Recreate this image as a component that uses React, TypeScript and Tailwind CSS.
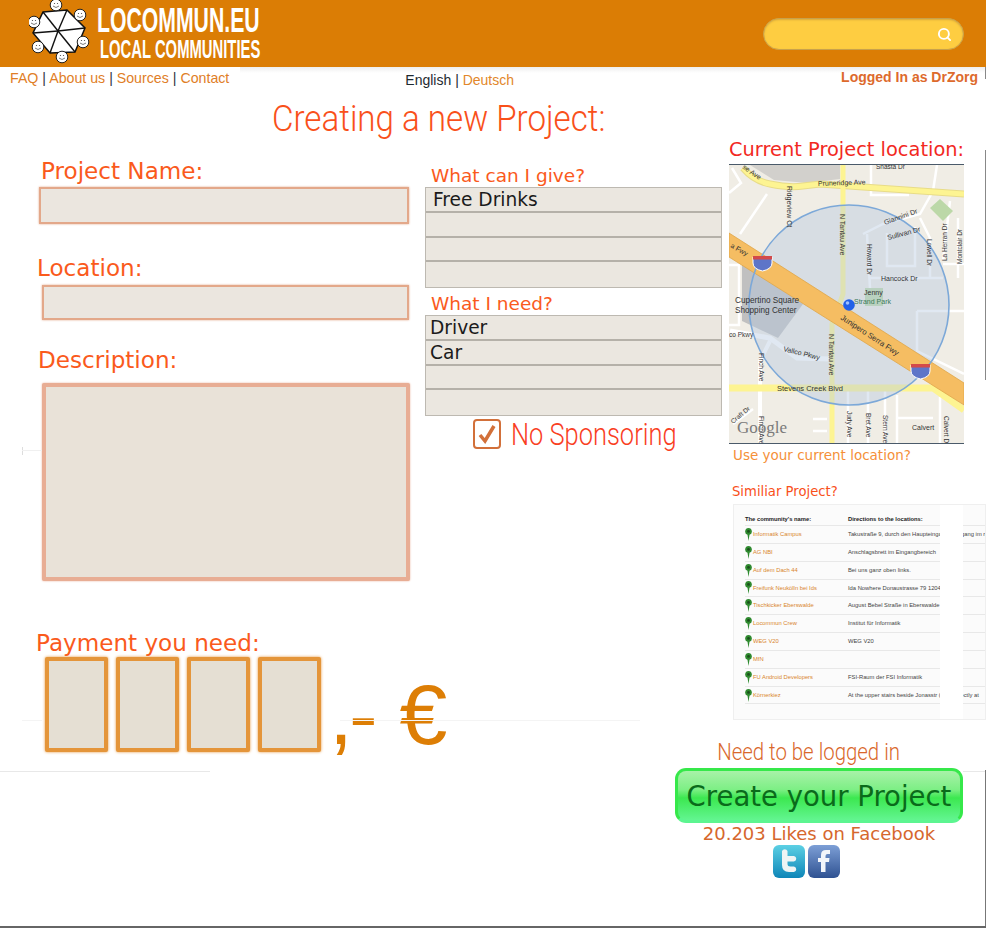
import { Search } from "lucide-react";

const labelClass =
  "block font-['DejaVu_Sans'] text-[23.100px] leading-[32px] text-[#fa5a1c]";
const inputClass =
  "bg-[#ebe6df] border-2 border-[#e3a88a] shadow-[0_0_2px_#e3a88a]";

const ListBox = ({ rows, indent }: { rows: string[]; indent: string }) => {
  return (
    <div className="flex flex-col w-[297px] border border-[#bdb9b1] ml-[1px]">
      {rows.map((row, i) => (
        <div
          key={i}
          className={`h-[24.75px] bg-[#ebe7e0] border-b-2 last:border-b-0 border-[#b5b1a9] font-['DejaVu_Sans'] text-[18.6px] leading-[23px] text-[#1b1b1b] ${indent}`}
        >
          {row}
        </div>
      ))}
    </div>
  );
};

const Logo = () => {
  const center = [29, 31];
  const corners = [
    [14, 12],
    [38, 10],
    [56, 28],
    [46, 52],
    [21, 53],
    [4, 33],
  ];
  const faces = [
    [27, 5],
    [51, 15],
    [54, 42],
    [33, 57],
    [9, 47],
    [5, 22],
  ];
  return (
    <svg width="62" height="65" viewBox="0 0 62 65" className="shrink-0">
      <polygon
        points={corners.map((c) => c.join(",")).join(" ")}
        fill="#fff"
        stroke="#111"
        strokeWidth="1.500"
      />
      {corners.map(([x, y], i) => (
        <path
          key={i}
          d={`M${center[0]} ${center[1]}L${x} ${y}`}
          stroke="#111"
          strokeWidth="1.400"
        />
      ))}
      {faces.map(([cx, cy], i) => (
        <g key={i}>
          <circle cx={cx} cy={cy} r="5.800" fill="#fff" stroke="#222" strokeWidth="1" />
          <path d={`M${cx - 3} ${cy + 1}q3 3 6 0`} fill="none" stroke="#444" strokeWidth="0.700" />
          <circle cx={cx - 1.5} cy={cy - 1.5} r="0.600" fill="#444" />
          <circle cx={cx + 1.5} cy={cy - 1.5} r="0.600" fill="#444" />
        </g>
      ))}
    </svg>
  );
};

const MapView = () => {
  return (
    <svg
      width="235"
      height="278"
      viewBox="0 0 235 278"
      className="block box-content border-y border-[#4a5a6a] font-['Liberation_Sans']"
    >
      <rect width="235" height="278" fill="#f0ede5" />
      <path d="M21 0H111V14L78 18L45 15Z" fill="#d2d0cc" />

      <g fill="none" stroke="#fff" strokeWidth="2.500">
        <path d="M38 29L11 69" />
        <path d="M3 3L12 18L0 28" />
        <path d="M0 100H10V160H0" />
        <path d="M41 176L31 196V278" strokeWidth="4" />
        <path d="M1 166L41 173L68 193L101 194" strokeWidth="5" />
        <path d="M134 69L154 59L191 49L204 26L208 0" />
        <path d="M138 69L141 123" />
        <path d="M158 68V101H186V62" />
        <path d="M141 113H214" />
        <path d="M191 53L201 73V113" />
        <path d="M221 36L214 96" />
        <path d="M214 99H235" />
        <path d="M229 53V113" />
        <path d="M142 0V30H180" />
        <path d="M188 146H235M188 146V186L235 209" />
        <path d="M119 226V278M139 226V278M156 226V278M168 230V278" />
        <path d="M168 253H204M211 232V278" />
        <path d="M84 254H98M84 266H98" />
        <path d="M4 259L24 244" />
      </g>
      <path d="M211 34L224 46L214 56L201 43Z" fill="#bcd8a8" />
      <path d="M136 123H154V141H136Z" fill="#bcd8a8" />
      <path d="M13 99L74 139L49 173L13 156Z" fill="#c0c0c0" />

      <path d="M14 3Q25 16 41 19Q60 23 74 21L91 19L235 29" fill="none" stroke="#e8dc88" strokeWidth="7" />
      <path d="M14 3Q25 16 41 19Q60 23 74 21L91 19L235 29" fill="none" stroke="#fdf492" strokeWidth="5" />
      <path d="M114 0V129L103 159V278" fill="none" stroke="#fdf492" strokeWidth="5" />
      <path d="M0 223H204L235 245" fill="none" stroke="#fdf492" strokeWidth="7" />

      <circle cx="120" cy="140" r="100" fill="#b4c8e0" fillOpacity="0.42" />
      <path d="M0 68L235 218V240L0 92Z" fill="#f5bd62" stroke="#dfa648" strokeWidth="0.800" />
      <circle cx="120" cy="140" r="100" fill="none" stroke="#7ca8d8" strokeWidth="1.600" />

      <path d="M24 92h19v6q0 6-9.500 8q-9.500-2-9.500-8Z" fill="#5e75c8" stroke="#fff" strokeWidth="1" />
      <rect x="24" y="91" width="19" height="3.500" fill="#d34a4a" />
      <path d="M182 200h19v6q0 6-9.500 8q-9.500-2-9.500-8Z" fill="#5e75c8" stroke="#fff" strokeWidth="1" />
      <rect x="182" y="199" width="19" height="3.500" fill="#d34a4a" />
      <circle cx="120" cy="140" r="5.800" fill="#2260e8" />
      <circle cx="118.500" cy="138" r="1.800" fill="#9ec0ff" />

      <g fontSize="7" fill="#333">
        <text x="89" y="21" transform="rotate(-2 89 21)">Pruneridge Ave</text>
        <text x="13" y="3" transform="rotate(35 13 3)">se Ave</text>
        <text x="1" y="82" transform="rotate(30 1 82)">a Fwy</text>
        <text x="6" y="138" fontSize="8.200">Cupertino Square</text>
        <text x="6" y="148" fontSize="8.200">Shopping Center</text>
        <text x="0" y="172" fontSize="6.500">co Pkwy</text>
        <text x="54" y="186" transform="rotate(14 54 186)">Vallco Pkwy</text>
        <text x="48" y="226" fontSize="7.500">Stevens Creek Blvd</text>
        <text x="111" y="154" transform="rotate(33 111 154)" fontSize="7.800">Junipero Serra Fwy</text>
        <text x="135" y="130">Jenny</text>
        <text x="125" y="139" fill="#3b7a57">Strand Park</text>
        <text x="152" y="116">Hancock Dr</text>
        <text x="156" y="60" transform="rotate(-20 156 60)">Giannini Dr</text>
        <text x="159" y="75" transform="rotate(-15 159 75)">Sullivan Dr</text>
        <text x="183" y="265">Calvert</text>
        <text x="147" y="4" fontSize="6.500">Shasta Dr</text>
        <text x="4" y="259" transform="rotate(-40 4 259)" fontSize="6.500">Craft Dr</text>
        <text x="111" y="49" transform="rotate(90 111 49)">N Tantau Ave</text>
        <text x="100" y="169" transform="rotate(90 100 169)">N Tantau Ave</text>
        <text x="58" y="21" transform="rotate(90 58 21)">Ridgeview Ct</text>
        <text x="138" y="79" transform="rotate(90 138 79)" fontSize="6.500">Howard Dr</text>
        <text x="198" y="74" transform="rotate(90 198 74)" fontSize="6.500">Lowell Dr</text>
        <text x="30" y="188" transform="rotate(90 30 188)" fontSize="6.500">Finch Ave</text>
        <text x="30" y="251" transform="rotate(90 30 251)" fontSize="6.500">Finch Ave</text>
        <text x="118" y="246" transform="rotate(90 118 246)" fontSize="6.500">Judy Ave</text>
        <text x="137" y="248" transform="rotate(90 137 248)" fontSize="6.500">Bret Ave</text>
        <text x="154" y="250" transform="rotate(90 154 250)" fontSize="6.500">Stern Ave</text>
        <text x="215" y="251" transform="rotate(90 215 251)" fontSize="6.500">Calvert Dr</text>
        <text x="218" y="96" transform="rotate(-90 218 96)" fontSize="6.500">La Herran Dr</text>
        <text x="233" y="99" transform="rotate(-90 233 99)" fontSize="6.500">Montclair Dr</text>
      </g>
      <text x="8" y="268" fontSize="17" fill="#7a7a7a" fontFamily="Liberation Serif">Google</text>
    </svg>
  );
};

const Pin = () => {
  return (
    <svg width="7" height="13" viewBox="0 0 7 13" className="shrink-0">
      <path d="M3.500 0a3.500 3.500 0 0 1 1 6.800L3.500 13L2.500 6.800A3.500 3.500 0 0 1 3.500 0Z" fill="#2f8a2f" />
      <circle cx="3.500" cy="3.400" r="1.400" fill="#1c4f1c" />
    </svg>
  );
};

const communities = [
  ["Informatik Campus", "Takustraße 9, durch den Haupteingang, Ausgang im rechten Flur"],
  ["AG NBI", "Anschlagsbrett im Eingangbereich"],
  ["Auf dem Dach 44", "Bei uns ganz oben links."],
  ["Freifunk Neukölln bei Ids", "Ida Nowhere Donaustrasse 79 12043 Berlin"],
  ["Tischkicker Eberswalde", "August Bebel Straße in Eberswalde"],
  ["Locommun Crew", "Institut für Informatik"],
  ["WEG V20", "WEG V20"],
  ["MfN", ""],
  ["FU Android Developers", "FSI-Raum der FSI Informatik"],
  ["Körnerkiez", "At the upper stairs beside Jonasstr (and) directly at"],
];

const SimilarTable = () => {
  return (
    <div className="relative w-[253px] h-[216px] border border-[#efefef] bg-[#fbfbfb] pt-[9px] pl-[11px] overflow-hidden font-['Liberation_Sans'] text-[5.800px]">
      <div className="flex h-[12px] items-center font-bold text-[#222] border-b border-[#e8e8e8]">
        <span className="w-[103px] shrink-0">The community's name:</span>
        <span>Directions to the locations:</span>
      </div>
      {communities.map(([name, where]) => (
        <div key={name} className="flex h-[17.85px] items-center border-b border-[#e8e8e8] whitespace-nowrap">
          <span className="w-[103px] shrink-0 flex items-center gap-[1px] text-[#d9852c]">
            <Pin />
            {name}
          </span>
          <span className="text-[#444]">{where}</span>
        </div>
      ))}
      <div className="absolute top-0 bottom-0 left-[206px] w-[23px] bg-white" />
    </div>
  );
};

const App = () => {
  return (
    <div className="relative w-[986px] h-[928px] overflow-hidden bg-white border-b-2 border-[#666] font-['Liberation_Sans']">
      <header className="h-[67px] bg-[#db7d05] flex items-start pl-[29px]">
        <Logo />
        <div className="ml-[6px] flex flex-col items-start text-white font-bold">
          <span className="text-[35px] leading-[28px] mt-[6px] origin-left scale-x-[0.606] whitespace-nowrap">
            LOCOMMUN.EU
          </span>
          <span className="text-[25px] leading-[22px] ml-[3px] mt-[4px] origin-left scale-x-[0.593] whitespace-nowrap">
            LOCAL COMMUNITIES
          </span>
        </div>
        <div className="ml-auto mr-[22px] mt-[18px] w-[201px] h-[32px] rounded-full bg-[#fecd41] border border-[#c9a14a] shadow-[inset_0_1px_2px_#d8a83a] flex items-center justify-end pr-[11px]">
          <Search size={15} strokeWidth={3} className="text-white" />
        </div>
      </header>

      <nav className="relative h-[29px] flex items-start text-[14.200px]">
        <div className="absolute left-[240px] right-0 top-0 h-[6px] bg-gradient-to-b from-[#eeeeee] to-white" />
        <div className="relative ml-[10px] mt-[1px] text-[#df7e27]">
          FAQ <span className="text-[#334]">|</span> About us{" "}
          <span className="text-[#334]">|</span> Sources{" "}
          <span className="text-[#334]">|</span> Contact
        </div>
        <div className="relative ml-[176px] mt-[3px] text-[14px] text-[#1e2a30]">
          English <span>|</span> <span className="text-[#e2872a]">Deutsch</span>
        </div>
        <div className="relative ml-auto mr-[8px] font-bold text-[14px] text-[#dd6a2c]">
          Logged In as DrZorg
        </div>
      </nav>

      <h1 className="h-[42px] pt-[1px] pl-[272px] font-['Roboto'] font-light text-[36px] leading-[44px] text-[#f9501a] origin-[272px_0] scale-x-[0.92] whitespace-nowrap">
        Creating a new Project:
      </h1>

      <div className="flex items-start">
        <div className="w-[424px] shrink-0 pt-[17px]">
          <label className={`${labelClass} ml-[41px]`}>Project Name:</label>
          <div className={`ml-[39px] w-[370px] h-[37px] ${inputClass}`} />
          <label className={`${labelClass} ml-[37px] mt-[28px]`}>Location:</label>
          <div className={`ml-[42px] mt-[1px] w-[367px] h-[35px] ${inputClass}`} />
          <label className={`${labelClass} ml-[38px] mt-[24px]`}>Description:</label>
          <div className="ml-[42px] mt-[7px] w-[368px] h-[198px] rounded-[2px] bg-[#e9e2d8] border-[4px] border-[#e8ad94] shadow-[0_0_2px_#e8ad94]" />
          <label className={`${labelClass} ml-[36px] mt-[46px]`}>Payment you need:</label>
          <div className="ml-[45px] -mt-[2px] flex items-start">
            {[0, 1, 2, 3].map((i) => (
              <div
                key={i}
                className="w-[63px] h-[95px] mr-[8px] shrink-0 bg-[#e5dfd3] border-[4px] border-[#e4953a] rounded-[2px] shadow-[0_0_3px_#e4953a]"
              />
            ))}
            <span className="mt-[12px] shrink-0 text-[86px] leading-[90px] tracking-[-4px] [word-spacing:6px] text-[#dd7e05] whitespace-nowrap">
              ,- €
            </span>
          </div>
        </div>

        <div className="w-[305px] shrink-0 pt-[27px]">
          <h2 className="ml-[7px] font-['DejaVu_Sans'] text-[18.500px] leading-[22px] text-[#fa5a1c]">
            What can I give?
          </h2>
          <ListBox rows={["Free Drinks", "", "", ""]} indent="pl-[7px]" />
          <h2 className="ml-[7px] mt-[5px] font-['DejaVu_Sans'] text-[18.500px] leading-[22px] text-[#fa5a1c]">
            What I need?
          </h2>
          <ListBox rows={["Driver", "Car", "", ""]} indent="pl-[4px]" />
          <div className="flex items-center ml-[49px] mt-[2px] h-[32px]">
            <div className="w-[28px] h-[30px] rounded-[4px] border-2 border-[#d2703a] flex items-center justify-center">
              <svg width="20" height="20" viewBox="0 0 20 20">
                <path d="M3 11l5 6L17 2" fill="none" stroke="#d2703a" strokeWidth="3.500" />
              </svg>
            </div>
            <span className="ml-[10px] font-['Roboto'] font-light text-[32px] leading-[32px] text-[#f9401f] origin-left scale-x-[0.795] whitespace-nowrap">
              No Sponsoring
            </span>
          </div>
        </div>

        <div className="shrink-0 w-[257px]">
          <h2 className="mb-[4px] font-['DejaVu_Sans'] text-[20px] leading-[22px] text-[#f2291f] whitespace-nowrap origin-left scale-x-[0.97]">
            Current Project location:
          </h2>
          <MapView />
          <a className="block ml-[4px] mt-[1px] font-['DejaVu_Sans'] text-[13.500px] leading-[20px] text-[#f59038]">
            Use your current location?
          </a>
          <h3 className="ml-[3px] mt-[18px] mb-[3px] font-['DejaVu_Sans'] text-[13.200px] leading-[18px] text-[#f9501a]">
            Similiar Project?
          </h3>
          <div className="ml-[4px]">
            <SimilarTable />
          </div>

          <div className="-ml-[54px] mt-[18px] w-[288px] flex flex-col items-center">
            <p className="font-['Roboto'] font-light text-[24px] leading-[28px] text-[#d9672b] scale-x-[0.85] whitespace-nowrap -ml-[20px]">
              Need to be logged in
            </p>
            <button className="w-[288px] h-[55px] mt-[2px] rounded-[11px] border-[3px] border-[#36e84a] border-b-[#5cf590] bg-[linear-gradient(#a8f2a8_0%,#7def85_38%,#3ce850_55%,#62f590_100%)] font-['DejaVu_Sans'] text-[27.500px] leading-[46px] text-[#0a6b1b] whitespace-nowrap">
              Create your Project
            </button>
            <p className="font-['DejaVu_Sans'] text-[18px] leading-[22px] text-[#d6672d] whitespace-nowrap">
              20.203 Likes on Facebook
            </p>
            <div className="flex gap-[3px] -ml-[26px]">
              <svg width="32" height="33" viewBox="0 0 32 33">
                <defs>
                  <linearGradient id="tw" x1="0" y1="0" x2="0" y2="1">
                    <stop offset="0" stopColor="#5cd0e4" />
                    <stop offset="1" stopColor="#0e86b8" />
                  </linearGradient>
                </defs>
                <rect width="32" height="33" rx="6" fill="url(#tw)" />
                <path
                  d="M9 6a3 3 0 0 1 5.500 0V11H21a2.800 2.800 0 0 1 0 5.500H14.500V19q0 2.500 3 2.500H21a2.800 2.800 0 0 1 0 5.500H16q-7 0-7-7Z"
                  fill="#eef4f4"
                />
              </svg>
              <svg width="32" height="33" viewBox="0 0 32 33">
                <defs>
                  <linearGradient id="fb" x1="0" y1="0" x2="0" y2="1">
                    <stop offset="0" stopColor="#7d9fd6" />
                    <stop offset="1" stopColor="#2f5292" />
                  </linearGradient>
                </defs>
                <rect width="32" height="33" rx="6" fill="url(#fb)" />
                <path
                  d="M13 27V17H10V13H13V10Q13 5 18 5H22V9H19.500Q17.500 9 17.500 11V13H21.500L21 17H17.500V27Z"
                  fill="#f2f5fa"
                />
              </svg>
            </div>
          </div>
        </div>
      </div>

      {/* leftover slicing marks of the mockup */}
      <div className="absolute left-0 top-[771px] w-[210px] h-px bg-[#e8e8e8]" />
      <div className="absolute left-[22px] top-[447px] w-px h-[8px] bg-[#dddddd]" />
      <div className="absolute left-[22px] top-[450px] w-[20px] h-px bg-[#f0f0f0]" />
      <div className="absolute left-[22px] top-[720px] w-[20px] h-px bg-[#f4f4f4]" />
      <div className="absolute left-[340px] top-[720px] w-[300px] h-px bg-[#f4f4f4]" />
      <div className="absolute left-[963px] top-[771px] w-[23px] h-px bg-[#e8e8e8]" />
      <div className="absolute right-0 top-[67px] h-[12px] w-px bg-[#888888]" />
      <div className="absolute right-0 top-[150px] h-[230px] w-px bg-[#888888]" />
      <div className="absolute right-0 top-[770px] bottom-0 w-px bg-[#777777]" />
    </div>
  );
};

export default App;
